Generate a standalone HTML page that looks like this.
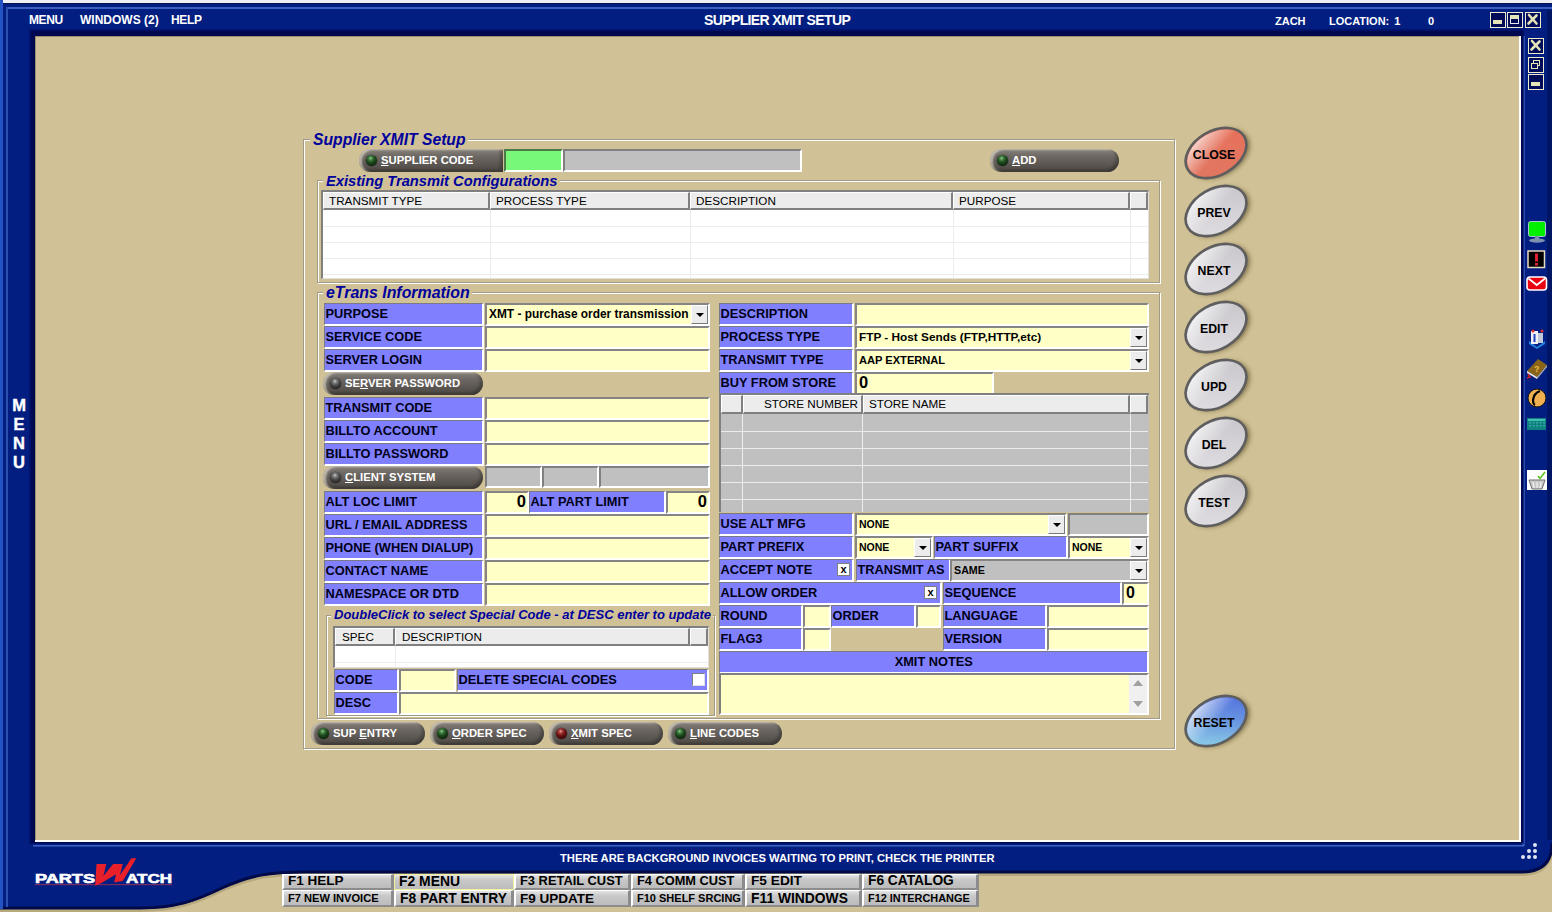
<!DOCTYPE html><html><head><meta charset="utf-8"><style>
*{box-sizing:border-box;margin:0;padding:0}
html,body{width:1552px;height:912px;overflow:hidden}
body{position:relative;background:#d0c196;font-family:"Liberation Sans",sans-serif}
div,span,i{position:absolute}
.lb{background:#8080ff;border-top:1px solid #7a7a86;border-left:1px solid #7a7a86;border-bottom:2px solid #fff;border-right:2px solid #fff;font-weight:bold;font-size:12.8px;line-height:20px;padding-left:0.5px;color:#000018;white-space:nowrap;overflow:hidden}
.fd{background:#ffffc6;border-top:2px solid #858585;border-left:2px solid #858585;border-bottom:2px solid #fff;border-right:2px solid #fff;font-weight:bold;font-size:12px;line-height:18px;padding-left:2px;color:#000;white-space:nowrap;overflow:hidden}
.ct{position:static}
.dd{right:0;top:0;width:17px;height:19px;background:#ececec;border-left:1px solid #fff;border-top:1px solid #fff;border-right:1px solid #7a7a7a;border-bottom:1px solid #7a7a7a}
.dd i{left:4px;top:7px;width:0;height:0;border-left:4px solid transparent;border-right:4px solid transparent;border-top:4px solid #000}
.pill{border-radius:11px 12px 12px 11px;background:linear-gradient(180deg,#88827c 0%,#6e6964 30%,#5a5550 70%,#4a4642 100%);box-shadow:inset 3px 1px 2px rgba(255,248,225,.55), inset -3px -2px 3px rgba(0,0,0,.25)}
.led{left:6.5px;top:5.5px;width:11.5px;height:11.5px;border-radius:50%;box-shadow:0 0 0 .5px rgba(0,0,0,.4)}
.pt{left:22px;top:0;line-height:22px;color:#fff;font-weight:bold;font-size:11.3px;white-space:nowrap}
.pt u{text-decoration:underline}
.gb{border:1px solid #a09a86;box-shadow:1px 1px 0 #fff, inset 1px 1px 0 #fff}
.gt{color:#00009c;font-weight:bold;font-style:italic;background:#d0c196;white-space:nowrap;padding:0 2px 0 3px;line-height:1}
.hdr{background:#ececec;border-top:1px solid #fff;border-left:1px solid #fff;border-right:2px solid #808080;border-bottom:2px solid #808080;font-size:11.7px;line-height:15px;padding-left:5px;color:#000;white-space:nowrap;overflow:hidden}
.fk{background:linear-gradient(180deg,#e4e4e4 0%,#c8c8c8 35%,#bcbcbc 100%);border-top:1px solid #fff;border-left:2px solid #fff;border-right:3px solid #8c8c8c;border-bottom:2px solid #8c8c8c;font-weight:bold;color:#000;white-space:nowrap;overflow:hidden;padding-left:4px}
.ovt{font-weight:bold;font-size:13.3px;color:#000;white-space:nowrap;text-align:center}
.wt{color:#fff;font-weight:bold;white-space:nowrap}
</style></head><body>

<svg style="position:absolute;left:0;top:0" width="1552" height="912" viewBox="0 0 1552 912">
<defs>
<linearGradient id="tb" x1="0" y1="0" x2="0" y2="1">
<stop offset="0" stop-color="#0c2c90"/><stop offset="1" stop-color="#021c78"/></linearGradient>
</defs>
<rect x="0" y="0" width="1552" height="3" fill="#eef0f6"/>
<path d="M1552,843 Q1552,874 1522,874 H305 C270,874 250,877 222,890 C195,903 175,910 140,910 H0" fill="none" stroke="#8a7a50" stroke-width="4" opacity=".35"/><path d="M0,3 H1552 V843 Q1552,873 1522,873 H305 C270,873 250,876 222,889 C195,902 175,909 140,909 H0 Z" fill="#011e80"/>
<path d="M1552,843 Q1552,872 1522,872 H305 C270,872 250,875 222,888 C195,901 175,908 140,908 H0" fill="none" stroke="#000a48" stroke-width="3"/>
<rect x="0" y="3" width="1552" height="1" fill="#061450"/>
<rect x="6" y="7" width="1546" height="2" fill="#3c62c0"/>
<rect x="0" y="0" width="3" height="909" fill="#2454c4"/>
<rect x="6" y="7" width="2" height="900" fill="#2c50b0"/>
<rect x="1522" y="36" width="3" height="810" fill="#2a4cb0"/>
<rect x="1547" y="10" width="5" height="830" fill="#000a40" opacity=".45"/>
<rect x="29" y="29" width="1495" height="815" fill="#000a58" opacity=".55"/>
<rect x="31" y="31" width="1492" height="812" fill="#000850"/>
<rect x="33" y="845" width="1491" height="1.6" fill="#3a60c0"/>
<rect x="35" y="36" width="1486" height="806" fill="#ffffff"/>
<rect x="35" y="36" width="1484" height="804" fill="#9a9070"/>
<rect x="36" y="37" width="1483" height="803" fill="#d0c196"/>
</svg>

<div class="wt" style="left:29px;top:12px;font-size:12px;letter-spacing:-0.4px;line-height:16px">MENU</div>
<div class="wt" style="left:80px;top:12px;font-size:12px;line-height:16px">WINDOWS (2)</div>
<div class="wt" style="left:171px;top:12px;font-size:12px;letter-spacing:-0.3px;line-height:16px">HELP</div>
<div class="wt" style="left:704px;top:12px;font-size:14px;letter-spacing:-0.62px">SUPPLIER XMIT SETUP</div>
<div class="wt" style="left:1275px;top:15px;font-size:11px">ZACH</div>
<div class="wt" style="left:1329px;top:15px;font-size:11px;word-spacing:2px">LOCATION: 1</div>
<div class="wt" style="left:1428px;top:15px;font-size:11px">0</div>
<div style="left:1490px;top:12px;width:16px;height:16px;background:#000c58;border:1.5px solid #ecebd0;overflow:hidden"><span style="left:2px;top:7px;width:9px;height:4px;background:#e4e4b8"></span></div>
<div style="left:1507px;top:12px;width:16px;height:16px;background:#000c58;border:1.5px solid #ecebd0;overflow:hidden"><span style="left:2px;top:2px;width:9px;height:9px;border:1.5px solid #e8ecf0;border-top:4px solid #e4e4b8"></span></div>
<div style="left:1525px;top:12px;width:16px;height:16px;background:#000c58;border:1.5px solid #ecebd0;overflow:hidden"><svg style="position:absolute;left:0;top:0" width="13" height="13"><path d="M3,2 L10.5,10.5 M10.5,2.5 L2.5,10.5" stroke="#e4e4b8" stroke-width="2.6" stroke-linecap="round"/></svg></div>
<div style="left:1528px;top:38px;width:16px;height:16px;background:#000c58;border:1.5px solid #ecebd0;overflow:hidden"><svg style="position:absolute;left:0;top:0" width="13" height="13"><path d="M3,2 L10.5,10.5 M10.5,2.5 L2.5,10.5" stroke="#e4e4b8" stroke-width="2.6" stroke-linecap="round"/></svg></div>
<div style="left:1528px;top:57px;width:16px;height:16px;background:#000c58;border:1.5px solid #ecebd0;overflow:hidden"><span style="left:4px;top:1.5px;width:7px;height:6px;border:1.5px solid #e4e4b8"></span><span style="left:1.5px;top:5px;width:7px;height:6px;border:1.5px solid #e4e4b8;background:#000c58"></span></div>
<div style="left:1528px;top:74px;width:16px;height:16px;background:#000c58;border:1.5px solid #ecebd0;overflow:hidden"><span style="left:2px;top:7px;width:9px;height:4px;background:#e4e4b8"></span></div>
<div class="wt" style="left:9px;top:397.0px;width:20px;text-align:center;font-size:16.5px;line-height:16px;-webkit-text-stroke:0.4px #fff">M</div>
<div class="wt" style="left:9px;top:416.1px;width:20px;text-align:center;font-size:16.5px;line-height:16px;-webkit-text-stroke:0.4px #fff">E</div>
<div class="wt" style="left:9px;top:435.2px;width:20px;text-align:center;font-size:16.5px;line-height:16px;-webkit-text-stroke:0.4px #fff">N</div>
<div class="wt" style="left:9px;top:454.3px;width:20px;text-align:center;font-size:16.5px;line-height:16px;-webkit-text-stroke:0.4px #fff">U</div>
<svg style="position:absolute;left:0;top:0" width="1552" height="912"><rect x="1528.5" y="221.5" width="17" height="15" rx="2" fill="#00f000" stroke="#b0c0d8" stroke-width="1"/><ellipse cx="1537" cy="240.5" rx="8" ry="2.2" fill="#8090b0"/><rect x="1535" y="236" width="4" height="3" fill="#8090b0"/><rect x="1528" y="251" width="16.5" height="16.5" fill="#000" stroke="#e8dcc0" stroke-width="1.5"/><rect x="1535" y="253.5" width="3" height="8" fill="#e02030"/><rect x="1535" y="263" width="3" height="2.5" fill="#e02030"/><rect x="1527" y="277" width="19.5" height="13" rx="3" fill="#e80010" stroke="#fff" stroke-width="1.6"/><polyline points="1528.5,278.5 1536.8,285 1545,278.5" fill="none" stroke="#fff" stroke-width="1.8"/><path d="M1529,341 L1537,347 L1545,341 L1545,344 L1537,349 L1529,344 Z" fill="#2080e0"/><rect x="1531" y="331" width="7" height="13" fill="#f0f0f8"/><rect x="1533.5" y="334" width="2" height="8" fill="#2040c0"/><rect x="1538" y="333" width="5" height="10" fill="#c0c8d8"/><circle cx="1533" cy="331" r="1.5" fill="#e03030"/><circle cx="1542" cy="331" r="1.5" fill="#e03030"/><path d="M1527,371 L1538,359 L1547,365 L1537,377 Z" fill="#8a6418"/><path d="M1527,371 L1537,377 L1537,379 L1527,373 Z" fill="#e8e8e8"/><path d="M1537,377 L1547,365 L1547,367 L1537,379 Z" fill="#b0b0b0"/><text x="1534" y="372" font-family="Liberation Sans" font-weight="bold" font-size="9" fill="#f0c040">?</text><path d="M1528,374 L1530,377 L1527,378" fill="none" stroke="#d02020" stroke-width="1.5"/><circle cx="1537" cy="398" r="9" fill="#f0b050" stroke="#101010" stroke-width="1"/><path d="M1540,391 Q1534,393 1533,400 Q1533,404 1535,405" fill="none" stroke="#000" stroke-width="2.2"/><rect x="1527" y="418" width="19" height="12" fill="#108080"/><rect x="1528" y="419" width="17" height="2" fill="#40c0b0"/><g fill="#30a8a0"><rect x="1529" y="422" width="2" height="1.5"/><rect x="1532.5" y="422" width="2" height="1.5"/><rect x="1536" y="422" width="2" height="1.5"/><rect x="1539.5" y="422" width="2" height="1.5"/><rect x="1543" y="422" width="2" height="1.5"/><rect x="1529" y="425" width="2" height="1.5"/><rect x="1532.5" y="425" width="2" height="1.5"/><rect x="1536" y="425" width="2" height="1.5"/><rect x="1539.5" y="425" width="2" height="1.5"/><rect x="1543" y="425" width="2" height="1.5"/></g><rect x="1527" y="470" width="20" height="20" fill="#fcfcfc"/><path d="M1529,480 L1545,480 L1542,489 L1532,489 Z" fill="#c8c8c8" stroke="#707070" stroke-width="1"/><g stroke="#f8f8f8" stroke-width="1"><line x1="1533" y1="482" x2="1534" y2="488"/><line x1="1537" y1="482" x2="1537" y2="488"/><line x1="1541" y1="482" x2="1540" y2="488"/></g><polyline points="1538,476 1540,478.5 1545,472" fill="none" stroke="#60c020" stroke-width="1.6"/></svg>
<div class="wt" style="left:560px;top:852px;font-size:11.2px">THERE ARE BACKGROUND INVOICES WAITING TO PRINT, CHECK THE PRINTER</div>
<div style="left:1533px;top:843px;width:4px;height:4px;border-radius:50%;background:#dfe4f0"></div>
<div style="left:1527px;top:849px;width:4px;height:4px;border-radius:50%;background:#dfe4f0"></div>
<div style="left:1533px;top:849px;width:4px;height:4px;border-radius:50%;background:#dfe4f0"></div>
<div style="left:1521px;top:855px;width:4px;height:4px;border-radius:50%;background:#dfe4f0"></div>
<div style="left:1527px;top:855px;width:4px;height:4px;border-radius:50%;background:#dfe4f0"></div>
<div style="left:1533px;top:855px;width:4px;height:4px;border-radius:50%;background:#dfe4f0"></div>
<div class="fk" style="left:282px;top:874px;width:112px;height:16px;font-size:13.5px;line-height:12px;">F1 HELP</div>
<div class="fk" style="left:394px;top:874px;width:120px;height:16px;font-size:13.9px;line-height:12px;border-color:#f4f09a;border-width:1.5px;line-height:13.5px;">F2 MENU</div>
<div class="fk" style="left:514px;top:874px;width:117px;height:16px;font-size:12.9px;line-height:12px;">F3 RETAIL CUST</div>
<div class="fk" style="left:631px;top:874px;width:114px;height:16px;font-size:12.8px;line-height:12px;">F4 COMM CUST</div>
<div class="fk" style="left:745px;top:874px;width:117px;height:16px;font-size:13.7px;line-height:12px;">F5 EDIT</div>
<div class="fk" style="left:862px;top:874px;width:117px;height:16px;font-size:13.75px;line-height:12px;">F6 CATALOG</div>
<div class="fk" style="left:282px;top:890px;width:112px;height:17px;font-size:11.1px;line-height:15px">F7 NEW INVOICE</div>
<div class="fk" style="left:394px;top:890px;width:120px;height:17px;font-size:13.85px;line-height:15px">F8 PART ENTRY</div>
<div class="fk" style="left:514px;top:890px;width:117px;height:17px;font-size:13.5px;line-height:15px">F9 UPDATE</div>
<div class="fk" style="left:631px;top:890px;width:114px;height:17px;font-size:11.0px;line-height:15px">F10 SHELF SRCING</div>
<div class="fk" style="left:745px;top:890px;width:117px;height:17px;font-size:13.85px;line-height:15px">F11 WINDOWS</div>
<div class="fk" style="left:862px;top:890px;width:117px;height:17px;font-size:10.9px;line-height:15px">F12 INTERCHANGE</div>
<svg style="position:absolute;left:0;top:0" width="1552" height="912"><rect x="35" y="884" width="137" height="1.2" fill="#7a2a60"/><text x="35" y="882.5" font-family="Liberation Sans" font-weight="bold" font-size="12.6" fill="#fff" textLength="60" lengthAdjust="spacingAndGlyphs" stroke="#fff" stroke-width="0.6">PARTS</text><text x="126" y="882.5" font-family="Liberation Sans" font-weight="bold" font-size="12.6" fill="#fff" textLength="46" lengthAdjust="spacingAndGlyphs" stroke="#fff" stroke-width="0.6">ATCH</text><polygon points="96.5,864 106.3,864 103.4,876 113.1,864 122.8,864 119.9,875.2 131.4,858.3 136.3,858.3 122.8,881 114.1,882.4 116,874.2 101.5,882.9 95.2,885.8" fill="#e8202a"/></svg>
<div class="gb" style="left:303px;top:139px;width:872px;height:610px;"></div>
<div class="gt" style="left:310px;top:132px;font-size:15.7px;">Supplier XMIT Setup</div>
<div class="pill" style="left:359px;top:149px;width:144px;height:23px;border-radius:11px 0 0 11px"><span class="led" style="background:radial-gradient(circle at 42% 30%, #a0d0a0 0, #4a8a48 15%, #1e4a1e 42%, #0a220a 80%)"></span><span class="pt"><u>S</u>UPPLIER CODE</span></div>
<div style="left:504px;top:149px;width:59px;height:23px;background:#78f878;border-top:2px solid #4a7a4a;border-left:2px solid #4a7a4a;border-bottom:2px solid #fff;border-right:2px solid #fff"></div>
<div style="left:563px;top:149px;width:239px;height:23px;background:#c0c0c0;border-top:2px solid #808080;border-left:2px solid #808080;border-bottom:2px solid #fff;border-right:2px solid #fff"></div>
<div class="pill" style="left:990px;top:149px;width:129px;height:23px;"><span class="led" style="background:radial-gradient(circle at 42% 30%, #a0d0a0 0, #4a8a48 15%, #1e4a1e 42%, #0a220a 80%)"></span><span class="pt"><u>A</u>DD</span></div>
<div class="gb" style="left:317px;top:180px;width:843px;height:103px;"></div>
<div class="gt" style="left:323px;top:174px;font-size:14.7px;">Existing Transmit Configurations</div>
<div style="left:321px;top:190px;width:828px;height:89px;background:#fff;border-top:2px solid #808080;border-left:2px solid #808080;border-bottom:1px solid #e0e0e0;border-right:1px solid #e0e0e0"></div>
<div class="hdr" style="left:323px;top:192px;width:167px;height:18px">TRANSMIT TYPE</div>
<div class="hdr" style="left:490px;top:192px;width:200px;height:18px">PROCESS TYPE</div>
<div class="hdr" style="left:690px;top:192px;width:263px;height:18px">DESCRIPTION</div>
<div class="hdr" style="left:953px;top:192px;width:177px;height:18px">PURPOSE</div>
<div class="hdr" style="left:1130px;top:192px;width:18px;height:18px"></div>
<div style="left:323px;top:226px;width:825px;height:1px;background:#ececec"></div>
<div style="left:323px;top:242px;width:825px;height:1px;background:#ececec"></div>
<div style="left:323px;top:258px;width:825px;height:1px;background:#ececec"></div>
<div style="left:323px;top:274px;width:825px;height:1px;background:#ececec"></div>
<div style="left:490px;top:210px;width:1px;height:68px;background:#ececec"></div>
<div style="left:690px;top:210px;width:1px;height:68px;background:#ececec"></div>
<div style="left:953px;top:210px;width:1px;height:68px;background:#ececec"></div>
<div style="left:1130px;top:210px;width:1px;height:68px;background:#ececec"></div>
<div class="gb" style="left:317px;top:292px;width:843px;height:427px;"></div>
<div class="gt" style="left:323px;top:285px;font-size:15.9px;">eTrans Information</div>
<div class="lb" style="left:324px;top:303px;width:160px;height:23px;;">PURPOSE</div>
<div class="fd cb" style="left:485px;top:303px;width:225px;height:23px;background:#ffffc6;font-size:11.9px"><span class="ct">XMT - purchase order transmission</span><span class="dd"><i></i></span></div>
<div class="lb" style="left:324px;top:326px;width:160px;height:23px;;">SERVICE CODE</div>
<div class="fd" style="left:485px;top:326px;width:225px;height:23px;;"></div>
<div class="lb" style="left:324px;top:349px;width:160px;height:23px;;">SERVER LOGIN</div>
<div class="fd" style="left:485px;top:349px;width:225px;height:23px;;"></div>
<div class="pill" style="left:323px;top:372px;width:160px;height:23px;"><span class="led" style="background:radial-gradient(circle at 45% 30%, #d0d0d0 0, #808080 18%, #4a4a4a 45%, #202020 80%)"></span><span class="pt">SE<u>R</u>VER PASSWORD</span></div>
<div class="lb" style="left:324px;top:397px;width:160px;height:23px;;">TRANSMIT CODE</div>
<div class="fd" style="left:485px;top:397px;width:225px;height:23px;;"></div>
<div class="lb" style="left:324px;top:420px;width:160px;height:23px;;">BILLTO ACCOUNT</div>
<div class="fd" style="left:485px;top:420px;width:225px;height:23px;;"></div>
<div class="lb" style="left:324px;top:443px;width:160px;height:23px;;">BILLTO PASSWORD</div>
<div class="fd" style="left:485px;top:443px;width:225px;height:23px;;"></div>
<div class="pill" style="left:323px;top:466px;width:160px;height:23px;"><span class="led" style="background:radial-gradient(circle at 45% 30%, #d0d0d0 0, #808080 18%, #4a4a4a 45%, #202020 80%)"></span><span class="pt"><u>C</u>LIENT SYSTEM</span></div>
<div style="left:485px;top:466px;width:57px;height:22px;background:#c0c0c0;border-top:2px solid #808080;border-left:2px solid #808080;border-bottom:2px solid #fff;border-right:2px solid #fff"></div>
<div style="left:542px;top:466px;width:57px;height:22px;background:#c0c0c0;border-top:2px solid #808080;border-left:2px solid #808080;border-bottom:2px solid #fff;border-right:2px solid #fff"></div>
<div style="left:599px;top:466px;width:111px;height:22px;background:#c0c0c0;border-top:2px solid #808080;border-left:2px solid #808080;border-bottom:2px solid #fff;border-right:2px solid #fff"></div>
<div class="lb" style="left:324px;top:491px;width:160px;height:23px;;">ALT LOC LIMIT</div>
<div class="fd" style="left:485px;top:491px;width:44px;height:23px;font-size:16.5px;padding-right:1px;line-height:17px;text-align:right;">0</div>
<div class="lb" style="left:529px;top:491px;width:137px;height:23px;;">ALT PART LIMIT</div>
<div class="fd" style="left:666px;top:491px;width:44px;height:23px;font-size:16.5px;padding-right:1px;line-height:17px;text-align:right;">0</div>
<div class="lb" style="left:324px;top:514px;width:160px;height:23px;;">URL / EMAIL ADDRESS</div>
<div class="fd" style="left:485px;top:514px;width:225px;height:23px;;"></div>
<div class="lb" style="left:324px;top:537px;width:160px;height:23px;;">PHONE (WHEN DIALUP)</div>
<div class="fd" style="left:485px;top:537px;width:225px;height:23px;;"></div>
<div class="lb" style="left:324px;top:560px;width:160px;height:23px;;">CONTACT NAME</div>
<div class="fd" style="left:485px;top:560px;width:225px;height:23px;;"></div>
<div class="lb" style="left:324px;top:583px;width:160px;height:23px;;">NAMESPACE OR DTD</div>
<div class="fd" style="left:485px;top:583px;width:225px;height:23px;;"></div>
<div class="gb" style="left:326px;top:615px;width:389px;height:101px;"></div>
<div class="gt" style="left:331px;top:608px;font-size:13px;">DoubleClick to select Special Code - at DESC enter to update</div>
<div style="left:333px;top:626px;width:376px;height:42px;background:#fff;border-top:2px solid #808080;border-left:2px solid #808080;border-bottom:1px solid #e0e0e0;border-right:1px solid #e0e0e0"></div>
<div class="hdr" style="left:335px;top:628px;width:60px;height:18px;padding-left:6px">SPEC</div>
<div class="hdr" style="left:395px;top:628px;width:295px;height:18px;padding-left:6px">DESCRIPTION</div>
<div class="hdr" style="left:690px;top:628px;width:18px;height:18px;padding-left:6px"></div>
<div style="left:335px;top:662px;width:373px;height:1px;background:#ececec"></div>
<div style="left:395px;top:646px;width:1px;height:21px;background:#ececec"></div>
<div class="lb" style="left:334px;top:669px;width:65px;height:23px;;">CODE</div>
<div class="fd" style="left:399px;top:669px;width:57px;height:23px;;"></div>
<div class="lb" style="left:457px;top:669px;width:252px;height:23px;;">DELETE SPECIAL CODES</div>
<div style="left:692px;top:673px;width:13px;height:13px;background:#fff;border:1px solid #808080;border-right-color:#e0e0e0;border-bottom-color:#e0e0e0"></div>
<div class="lb" style="left:334px;top:692px;width:65px;height:23px;;">DESC</div>
<div class="fd" style="left:399px;top:692px;width:310px;height:23px;;"></div>
<div class="pill" style="left:311px;top:722px;width:114px;height:23px;"><span class="led" style="background:radial-gradient(circle at 42% 30%, #a0d0a0 0, #4a8a48 15%, #1e4a1e 42%, #0a220a 80%)"></span><span class="pt">SUP <u>E</u>NTRY</span></div>
<div class="pill" style="left:430px;top:722px;width:114px;height:23px;"><span class="led" style="background:radial-gradient(circle at 42% 30%, #a0d0a0 0, #4a8a48 15%, #1e4a1e 42%, #0a220a 80%)"></span><span class="pt"><u>O</u>RDER SPEC</span></div>
<div class="pill" style="left:549px;top:722px;width:114px;height:23px;"><span class="led" style="background:radial-gradient(circle at 42% 30%, #f0b0b0 0, #b04848 15%, #701414 42%, #380606 80%)"></span><span class="pt"><u>X</u>MIT SPEC</span></div>
<div class="pill" style="left:668px;top:722px;width:114px;height:23px;"><span class="led" style="background:radial-gradient(circle at 42% 30%, #a0d0a0 0, #4a8a48 15%, #1e4a1e 42%, #0a220a 80%)"></span><span class="pt"><u>L</u>INE CODES</span></div>
<div class="lb" style="left:719px;top:303px;width:135px;height:23px;;">DESCRIPTION</div>
<div class="fd" style="left:855px;top:303px;width:294px;height:23px;;"></div>
<div class="lb" style="left:719px;top:326px;width:135px;height:23px;;">PROCESS TYPE</div>
<div class="fd cb" style="left:855px;top:326px;width:294px;height:23px;background:#ffffc6;font-size:11.8px"><span class="ct">FTP - Host Sends (FTP,HTTP,etc)</span><span class="dd"><i></i></span></div>
<div class="lb" style="left:719px;top:349px;width:135px;height:23px;;">TRANSMIT TYPE</div>
<div class="fd cb" style="left:855px;top:349px;width:294px;height:23px;background:#ffffc6;font-size:11.1px"><span class="ct">AAP EXTERNAL</span><span class="dd"><i></i></span></div>
<div class="lb" style="left:719px;top:372px;width:135px;height:23px;;">BUY FROM STORE</div>
<div class="fd" style="left:855px;top:372px;width:139px;height:23px;font-size:16.5px;line-height:17px;">0</div>
<div style="left:719px;top:393px;width:430px;height:119px;background:#c0c0c0;border-top:2px solid #808080;border-left:2px solid #808080"></div>
<div class="hdr" style="left:721px;top:395px;width:22px;height:19px;text-align:left;"></div>
<div class="hdr" style="left:743px;top:395px;width:120px;height:19px;text-align:right;padding-right:3px;padding-left:0;">STORE NUMBER</div>
<div class="hdr" style="left:863px;top:395px;width:267px;height:19px;text-align:left;">STORE NAME</div>
<div class="hdr" style="left:1130px;top:395px;width:18px;height:19px;text-align:left;"></div>
<div style="left:721px;top:431px;width:427px;height:1px;background:#ececec"></div>
<div style="left:721px;top:448px;width:427px;height:1px;background:#ececec"></div>
<div style="left:721px;top:465px;width:427px;height:1px;background:#ececec"></div>
<div style="left:721px;top:482px;width:427px;height:1px;background:#ececec"></div>
<div style="left:721px;top:499px;width:427px;height:1px;background:#ececec"></div>
<div style="left:742px;top:414px;width:1px;height:98px;background:#ececec"></div>
<div style="left:862px;top:414px;width:1px;height:98px;background:#ececec"></div>
<div style="left:1130px;top:414px;width:1px;height:98px;background:#ececec"></div>
<div class="lb" style="left:719px;top:513px;width:135px;height:23px;;">USE ALT MFG</div>
<div class="fd cb" style="left:855px;top:513px;width:212px;height:23px;background:#ffffc6;font-size:10.5px"><span class="ct">NONE</span><span class="dd"><i></i></span></div>
<div style="left:1068px;top:513px;width:81px;height:23px;background:#c0c0c0;border-top:2px solid #808080;border-left:2px solid #808080;border-bottom:2px solid #fff;border-right:2px solid #fff"></div>
<div class="lb" style="left:719px;top:536px;width:135px;height:23px;;">PART PREFIX</div>
<div class="fd cb" style="left:855px;top:536px;width:78px;height:23px;background:#ffffc6;font-size:10.5px"><span class="ct">NONE</span><span class="dd"><i></i></span></div>
<div class="lb" style="left:934px;top:536px;width:134px;height:23px;;">PART SUFFIX</div>
<div class="fd cb" style="left:1068px;top:536px;width:81px;height:23px;background:#ffffc6;font-size:10.5px"><span class="ct">NONE</span><span class="dd"><i></i></span></div>
<div class="lb" style="left:719px;top:559px;width:135px;height:23px;;">ACCEPT NOTE</div>
<div style="left:837px;top:563px;width:13px;height:13px;background:#fff;border:1px solid #808080;font-weight:bold;font-size:11px;line-height:10px;text-align:center">x</div>
<div class="lb" style="left:856px;top:559px;width:95px;height:23px;;">TRANSMIT AS</div>
<div class="fd cb" style="left:950px;top:559px;width:199px;height:23px;background:#c0c0c0;font-size:10.7px"><span class="ct">SAME</span><span class="dd"><i></i></span></div>
<div class="lb" style="left:719px;top:582px;width:223px;height:23px;;">ALLOW ORDER</div>
<div style="left:924px;top:586px;width:13px;height:13px;background:#fff;border:1px solid #808080;font-weight:bold;font-size:11px;line-height:10px;text-align:center">x</div>
<div class="lb" style="left:943px;top:582px;width:179px;height:23px;;">SEQUENCE</div>
<div class="fd" style="left:1122px;top:582px;width:27px;height:23px;font-size:16px;line-height:17px;">0</div>
<div class="lb" style="left:719px;top:605px;width:84px;height:23px;;">ROUND</div>
<div class="fd" style="left:803px;top:605px;width:28px;height:23px;;"></div>
<div class="lb" style="left:831px;top:605px;width:85px;height:23px;;">ORDER</div>
<div class="fd" style="left:916px;top:605px;width:25px;height:23px;;"></div>
<div class="lb" style="left:943px;top:605px;width:104px;height:23px;;">LANGUAGE</div>
<div class="fd" style="left:1047px;top:605px;width:102px;height:23px;;"></div>
<div class="lb" style="left:719px;top:628px;width:84px;height:23px;;">FLAG3</div>
<div class="fd" style="left:803px;top:628px;width:28px;height:23px;;"></div>
<div class="lb" style="left:943px;top:628px;width:104px;height:23px;;">VERSION</div>
<div class="fd" style="left:1047px;top:628px;width:102px;height:23px;;"></div>
<div class="lb" style="left:719px;top:651px;width:430px;height:23px;;text-align:center;">XMIT NOTES</div>
<div style="left:719px;top:673px;width:430px;height:42px;background:#ffffc6;border-top:2px solid #808080;border-left:2px solid #808080;border-bottom:2px solid #fff;border-right:2px solid #fff"></div>
<div style="left:1129px;top:675px;width:18px;height:38px;background:#f0f0f0"></div>
<div style="left:1133px;top:680px;width:0;height:0;border-left:5px solid transparent;border-right:5px solid transparent;border-bottom:6px solid #a0a0a0"></div>
<div style="left:1133px;top:701px;width:0;height:0;border-left:5px solid transparent;border-right:5px solid transparent;border-top:6px solid #a0a0a0"></div>
<svg style="position:absolute;left:0;top:0" width="1552" height="912"><defs><linearGradient id="og" x1="1" y1="0" x2="0" y2="1"><stop offset="0" stop-color="#c4c2c8"/><stop offset="0.5" stop-color="#d4d2d6"/><stop offset="1" stop-color="#e2e0e4"/></linearGradient><linearGradient id="orr" x1="1" y1="0" x2="0" y2="1"><stop offset="0" stop-color="#e8705a"/><stop offset="1" stop-color="#e07862"/></linearGradient><linearGradient id="ob" x1="1" y1="0" x2="0" y2="1"><stop offset="0" stop-color="#4a62e0"/><stop offset="0.5" stop-color="#6a98e0"/><stop offset="1" stop-color="#98e0ea"/></linearGradient><linearGradient id="hl" x1="0.15" y1="0" x2="0.45" y2="0.55"><stop offset="0" stop-color="#fff" stop-opacity=".95"/><stop offset="0.35" stop-color="#fff" stop-opacity=".55"/><stop offset="1" stop-color="#fff" stop-opacity="0"/></linearGradient><filter id="sh" x="-30%" y="-30%" width="160%" height="160%"><feGaussianBlur stdDeviation="2"/></filter></defs><g transform="translate(1216,153)"><ellipse cx="2.5" cy="2.5" rx="33" ry="22" transform="rotate(-30)" fill="#5a4a28" opacity=".6" filter="url(#sh)"/><g transform="rotate(-30)"><ellipse cx="0" cy="0" rx="32.7" ry="22" fill="url(#orr)"/><ellipse cx="0" cy="0" rx="31" ry="20.5" fill="url(#hl)" opacity=".9"/><ellipse cx="0" cy="0" rx="32.7" ry="22" fill="none" stroke="#5e5e5e" stroke-width="2.6"/></g></g><g transform="translate(1216,211)"><ellipse cx="2.5" cy="2.5" rx="33" ry="22" transform="rotate(-30)" fill="#5a4a28" opacity=".6" filter="url(#sh)"/><g transform="rotate(-30)"><ellipse cx="0" cy="0" rx="32.7" ry="22" fill="url(#og)"/><ellipse cx="0" cy="0" rx="31" ry="20.5" fill="url(#hl)" opacity=".9"/><ellipse cx="0" cy="0" rx="32.7" ry="22" fill="none" stroke="#5e5e5e" stroke-width="2.6"/></g></g><g transform="translate(1216,269)"><ellipse cx="2.5" cy="2.5" rx="33" ry="22" transform="rotate(-30)" fill="#5a4a28" opacity=".6" filter="url(#sh)"/><g transform="rotate(-30)"><ellipse cx="0" cy="0" rx="32.7" ry="22" fill="url(#og)"/><ellipse cx="0" cy="0" rx="31" ry="20.5" fill="url(#hl)" opacity=".9"/><ellipse cx="0" cy="0" rx="32.7" ry="22" fill="none" stroke="#5e5e5e" stroke-width="2.6"/></g></g><g transform="translate(1216,327)"><ellipse cx="2.5" cy="2.5" rx="33" ry="22" transform="rotate(-30)" fill="#5a4a28" opacity=".6" filter="url(#sh)"/><g transform="rotate(-30)"><ellipse cx="0" cy="0" rx="32.7" ry="22" fill="url(#og)"/><ellipse cx="0" cy="0" rx="31" ry="20.5" fill="url(#hl)" opacity=".9"/><ellipse cx="0" cy="0" rx="32.7" ry="22" fill="none" stroke="#5e5e5e" stroke-width="2.6"/></g></g><g transform="translate(1216,385)"><ellipse cx="2.5" cy="2.5" rx="33" ry="22" transform="rotate(-30)" fill="#5a4a28" opacity=".6" filter="url(#sh)"/><g transform="rotate(-30)"><ellipse cx="0" cy="0" rx="32.7" ry="22" fill="url(#og)"/><ellipse cx="0" cy="0" rx="31" ry="20.5" fill="url(#hl)" opacity=".9"/><ellipse cx="0" cy="0" rx="32.7" ry="22" fill="none" stroke="#5e5e5e" stroke-width="2.6"/></g></g><g transform="translate(1216,443)"><ellipse cx="2.5" cy="2.5" rx="33" ry="22" transform="rotate(-30)" fill="#5a4a28" opacity=".6" filter="url(#sh)"/><g transform="rotate(-30)"><ellipse cx="0" cy="0" rx="32.7" ry="22" fill="url(#og)"/><ellipse cx="0" cy="0" rx="31" ry="20.5" fill="url(#hl)" opacity=".9"/><ellipse cx="0" cy="0" rx="32.7" ry="22" fill="none" stroke="#5e5e5e" stroke-width="2.6"/></g></g><g transform="translate(1216,501)"><ellipse cx="2.5" cy="2.5" rx="33" ry="22" transform="rotate(-30)" fill="#5a4a28" opacity=".6" filter="url(#sh)"/><g transform="rotate(-30)"><ellipse cx="0" cy="0" rx="32.7" ry="22" fill="url(#og)"/><ellipse cx="0" cy="0" rx="31" ry="20.5" fill="url(#hl)" opacity=".9"/><ellipse cx="0" cy="0" rx="32.7" ry="22" fill="none" stroke="#5e5e5e" stroke-width="2.6"/></g></g><g transform="translate(1216,721)"><ellipse cx="2.5" cy="2.5" rx="33" ry="22" transform="rotate(-30)" fill="#5a4a28" opacity=".6" filter="url(#sh)"/><g transform="rotate(-30)"><ellipse cx="0" cy="0" rx="32.7" ry="22" fill="url(#ob)"/><ellipse cx="0" cy="0" rx="31" ry="20.5" fill="url(#hl)" opacity=".9"/><ellipse cx="0" cy="0" rx="32.7" ry="22" fill="none" stroke="#5e5e5e" stroke-width="2.6"/></g></g></svg>
<div class="ovt" style="left:1176px;top:148px;width:76px;line-height:14px;font-size:12.3px">CLOSE</div>
<div class="ovt" style="left:1176px;top:206px;width:76px;line-height:14px;font-size:12.3px">PREV</div>
<div class="ovt" style="left:1176px;top:264px;width:76px;line-height:14px;font-size:12.3px">NEXT</div>
<div class="ovt" style="left:1176px;top:322px;width:76px;line-height:14px;font-size:12.3px">EDIT</div>
<div class="ovt" style="left:1176px;top:380px;width:76px;line-height:14px;font-size:12.3px">UPD</div>
<div class="ovt" style="left:1176px;top:438px;width:76px;line-height:14px;font-size:12.3px">DEL</div>
<div class="ovt" style="left:1176px;top:496px;width:76px;line-height:14px;font-size:12.3px">TEST</div>
<div class="ovt" style="left:1176px;top:716px;width:76px;line-height:14px;font-size:12.3px">RESET</div>
</body></html>
